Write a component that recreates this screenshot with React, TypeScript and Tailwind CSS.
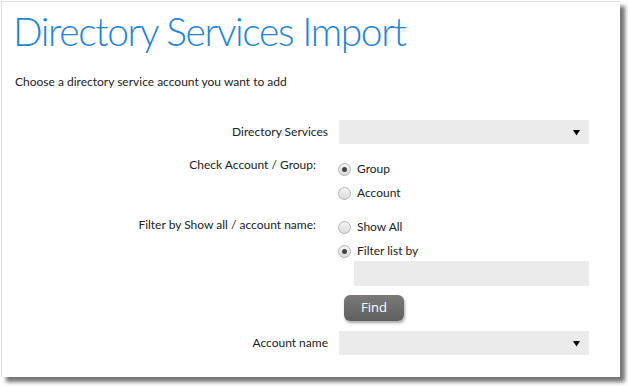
import React, { useState } from "react";

function Radio({ checked }: { checked: boolean }) {
    return (
        <span className="relative flex h-[13px] w-[13px] shrink-0 items-center justify-center rounded-full border border-[#b5b5b5] bg-gradient-to-b from-[#f4f4f4] to-[#dcdcdc]">
            {checked && <span className="h-[5px] w-[5px] rounded-full bg-[#444]" />}
        </span>
    );
}

function SelectBox() {
    return (
        <div className="flex h-[24px] w-[250px] items-center justify-end bg-[#ebebeb] pr-[9px]">
            <svg width="7" height="7" viewBox="0 0 7 7">
                <path d="M0 1 H7 L3.5 6.5 Z" fill="#000" />
            </svg>
        </div>
    );
}

function App() {
    const [accountType, setAccountType] = useState("group");
    const [filter, setFilter] = useState("filter");

    return (
        <div className="h-[386px] w-[628px] bg-white pl-[1px] pt-[1px]" style={{ fontFamily: "Lato, 'Open Sans', sans-serif" }}>
            <div className="h-[376px] w-[619px] border-l border-t border-[#dedede] bg-white shadow-[5px_5px_4px_rgba(0,0,0,0.55)]">
                <h1 className="pl-[11px] pt-[5px] text-[39px] font-light leading-[48px] tracking-[-1.4px] text-[#1e86d6]">
                    Directory Services Import
                </h1>
                <p className="mt-[18px] pl-[13px] text-[12px] text-[#222]">
                    Choose a directory service account you want to add
                </p>

                <div className="mt-[29px] flex flex-col text-[12px] text-[#222]">
                    <div className="flex items-center">
                        <label className="w-[337px] pr-[11px] text-right">Directory Services</label>
                        <SelectBox />
                    </div>

                    <div className="mt-[12px] flex">
                        <label className="w-[336px] pr-[22px] text-right">Check Account / Group:</label>
                        <div className="flex flex-col gap-[6px] pt-[4px]">
                            {[
                                ["group", "Group"],
                                ["account", "Account"],
                            ].map(([key, text]) => (
                                <div key={key} className="flex h-[18px] cursor-pointer items-center gap-[6px]" onClick={() => setAccountType(key)}>
                                    <Radio checked={accountType === key} />
                                    <span>{text}</span>
                                </div>
                            ))}
                        </div>
                    </div>

                    <div className="mt-[13px] flex">
                        <label className="w-[336px] pr-[22px] pt-[1px] text-right">Filter by Show all / account name:</label>
                        <div className="flex flex-col gap-[6px] pt-[3px]">
                            {[
                                ["all", "Show All"],
                                ["filter", "Filter list by"],
                            ].map(([key, text]) => (
                                <div key={key} className="flex h-[18px] cursor-pointer items-center gap-[6px]" onClick={() => setFilter(key)}>
                                    <Radio checked={filter === key} />
                                    <span>{text}</span>
                                </div>
                            ))}
                            <input type="text" className="-mt-[5px] ml-[16px] h-[25px] w-[235px] bg-[#ebebeb] outline-none" />
                        </div>
                    </div>

                    <div className="mt-[9px] flex">
                        <div className="w-[342px]" />
                        <button
                            className="h-[26px] w-[60px] rounded-[6px] bg-gradient-to-b from-[#7a7a7a] to-[#5f5f5f] text-[13px] text-white shadow-[1px_2px_3px_rgba(0,0,0,0.35)]"
                            style={{ fontFamily: "'Open Sans', sans-serif" }}
                        >
                            Find
                        </button>
                    </div>

                    <div className="mt-[10px] flex items-center">
                        <label className="w-[337px] pr-[11px] text-right">Account name</label>
                        <SelectBox />
                    </div>
                </div>
            </div>
        </div>
    );
}

export default App;
